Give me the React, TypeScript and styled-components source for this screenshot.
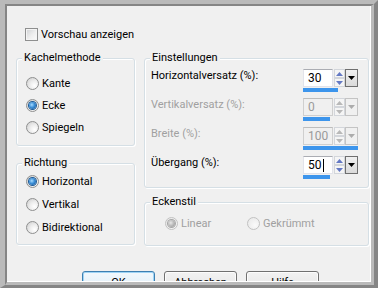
import React from "react";
import styled, { createGlobalStyle, css } from "styled-components";

const GlobalStyle = createGlobalStyle`
  html, body {
    margin: 0;
    padding: 0;
    background: #f0f0f0;
  }
  body {
    font-family: "Segoe UI", Roboto, "Noto Sans", sans-serif;
    font-size: 11px;
    color: #000;
  }
`;

const LIGHT = "#bababa";
const DARK = "#858585";

const Frame = styled.div`
  width: 378px;
  height: 288px;
  box-sizing: border-box;
  display: flex;
  flex-direction: column;
  border-style: solid;
  border-width: 4px 4px 3px 5px;
  border-color: ${LIGHT} ${DARK} ${DARK} ${LIGHT};
`;

const FrameInner = styled.div`
  flex: 1;
  min-height: 0;
  display: flex;
  flex-direction: column;
  border-style: solid;
  border-width: 2px 3px 3px 2px;
  border-color: ${DARK} ${LIGHT} ${LIGHT} ${DARK};
`;

const Content = styled.div`
  flex: 1;
  min-height: 0;
  overflow: hidden;
  background: #f0f0f0;
  border-right: 1px solid #fff;
  border-bottom: 1px solid #fff;
  padding-left: 9px;
`;

const PreviewRow = styled.label`
  display: flex;
  align-items: center;
  gap: 3px;
  height: 13px;
  margin-top: 22px;
  padding-left: 9px;
`;

const CheckBox = styled.span`
  width: 13px;
  height: 13px;
  box-sizing: border-box;
  border: 1px solid #8e8f8f;
  background: linear-gradient(135deg, #cfd1d4 0%, #eeeeee 55%, #fbfbfb 100%);
  box-shadow: inset 0 0 0 1px #f4f4f4;
`;

const Columns = styled.div`
  display: grid;
  grid-template-columns: 119px 225px;
  column-gap: 9px;
  margin-top: 17px;
  align-items: start;
`;

const Column = styled.div<{ $gap: number }>`
  display: flex;
  flex-direction: column;
  gap: ${(p) => p.$gap}px;
`;

const GroupBox = styled.div<{ $height: number }>`
  box-sizing: border-box;
  height: ${(p) => p.$height}px;
  border: 1px solid #d5dfe5;
  border-radius: 3px;
  box-shadow: inset 1px 1px 0 #fff, 1px 1px 0 #fff;
`;

const Caption = styled.div`
  width: fit-content;
  margin: -8px 0 0 5px;
  padding: 0 2px;
  line-height: 14px;
  background: #f0f0f0;
`;

const RadioList = styled.div<{ $top: number; $pitch: number }>`
  display: flex;
  flex-direction: column;
  margin-top: ${(p) => p.$top}px;
  padding-left: 9px;

  & > label {
    height: ${(p) => p.$pitch}px;
  }
`;

const RadioItem = styled.label<{ $disabled?: boolean }>`
  display: flex;
  align-items: center;
  gap: 3px;
  color: ${(p) => (p.$disabled ? "#a0a0a0" : "#000")};
`;

const RadioDot = styled.span<{ $checked?: boolean; $disabled?: boolean }>`
  width: 13px;
  height: 13px;
  box-sizing: border-box;
  border-radius: 50%;
  border: 1px solid ${(p) => (p.$disabled ? "#c2c2c2" : "#8e8f8f")};
  background: ${(p) =>
    p.$disabled
      ? "radial-gradient(circle at 65% 65%, #fafafa 0%, #e6e6e6 100%)"
      : "radial-gradient(circle at 68% 68%, #ffffff 0%, #ececec 45%, #c9c9c9 100%)"};
  display: flex;
  align-items: center;
  justify-content: center;

  ${(p) =>
    p.$checked &&
    css`
      &::after {
        content: "";
        width: 7px;
        height: 7px;
        border-radius: 50%;
        background: ${p.$disabled
          ? "radial-gradient(circle at 40% 40%, #e8e8e8 0%, #b5b5b5 55%, #8f8f8f 100%)"
          : "radial-gradient(circle at 40% 40%, #a9dcff 0%, #3b8fd8 45%, #0e4a8c 100%)"};
        box-shadow: 0 0 0 1px ${p.$disabled ? "#a7a7a7" : "#1c5a96"};
      }
    `}
`;

const SettingsList = styled.div`
  display: flex;
  flex-direction: column;
  margin-top: 4px;
  padding: 0 10px 0 6px;
`;

const SettingRow = styled.div<{ $disabled?: boolean }>`
  display: grid;
  grid-template-columns: 1fr 55px;
  align-items: start;
  height: 29px;
  color: ${(p) => (p.$disabled ? "#a0a0a0" : "#000")};
`;

const SettingLabel = styled.span`
  line-height: 13px;
`;

const Spin = styled.div`
  display: flex;
  flex-direction: column;
`;

const SpinTop = styled.div`
  display: flex;
  height: 18px;
`;

const SpinInput = styled.div<{ $disabled?: boolean }>`
  width: 30px;
  box-sizing: border-box;
  margin-right: 1px;
  padding-left: 4px;
  display: flex;
  align-items: center;
  font-size: 12px;
  background: ${(p) => (p.$disabled ? "#f0f0f0" : "#fff")};
  border: 1px solid ${(p) => (p.$disabled ? "#cfcfcf" : "#e2e3ea")};
  border-top-color: ${(p) => (p.$disabled ? "#bdbdbd" : "#abadb3")};
  color: ${(p) => (p.$disabled ? "#9a9a9a" : "#000")};
`;

const Caret = styled.span`
  width: 1px;
  height: 13px;
  background: #000;
  margin-left: 1px;
`;

const Spinner = styled.div`
  width: 11px;
  display: flex;
  flex-direction: column;
`;

const SpinButton = styled.div`
  flex: 1;
  box-sizing: border-box;
  border: 1px solid #d3d6db;
  background: #f5f5f5;
  display: flex;
  align-items: center;
  justify-content: center;
`;

const DropButton = styled.div<{ $disabled?: boolean }>`
  width: 13px;
  box-sizing: border-box;
  border: 1px solid ${(p) => (p.$disabled ? "#c4c4c4" : "#6f6f6f")};
  background: ${(p) =>
    p.$disabled ? "#f0f0f0" : "linear-gradient(#f0f0f0, #dadada)"};
  display: flex;
  align-items: center;
  justify-content: center;
`;

const Bar = styled.div`
  height: 4px;
  margin-top: 1px;
  background: #3d95ec;
`;

const StyleRow = styled.div`
  display: grid;
  grid-template-columns: 82px auto;
  height: 16px;
  margin-top: 6px;
  padding-left: 20px;
`;

const ButtonRow = styled.div`
  display: flex;
  gap: 9px;
  margin-top: 25px;
  padding-left: 66px;
`;

const DialogButton = styled.button<{ $default?: boolean }>`
  flex: none;
  width: 73px;
  height: 23px;
  padding: 0;
  font: inherit;
  color: #000;
  border-radius: 3px;
  border: 1px solid ${(p) => (p.$default ? "#3c7fb1" : "#707070")};
  background: ${(p) =>
    p.$default
      ? "linear-gradient(#f2f8fc 0%, #e6f2fa 50%, #d2e8f7 51%, #c4e0f4 100%)"
      : "linear-gradient(#f2f2f2 0%, #ebebeb 50%, #dddddd 51%, #cfcfcf 100%)"};
  box-shadow: inset 0 0 0 1px
    ${(p) => (p.$default ? "#9fd4f5" : "#fcfcfc")};
`;

const Arrow = ({ up, color }: { up?: boolean; color: string }) => (
  <svg width="7" height="4" viewBox="0 0 7 4">
    <path d={up ? "M0 4 L3.5 0 L7 4 Z" : "M0 0 L3.5 4 L7 0 Z"} fill={color} />
  </svg>
);

const DropArrow = ({ color }: { color: string }) => (
  <svg width="7" height="4" viewBox="0 0 7 4">
    <path d="M0 0 H7 L3.5 4 Z" fill={color} />
  </svg>
);

interface Setting {
  label: string;
  value: string;
  bar: number;
  disabled?: boolean;
  caret?: boolean;
}

const settings: Setting[] = [
  { label: "Horizontalversatz (%):", value: "30", bar: 35 },
  { label: "Vertikalversatz (%):", value: "0", bar: 27, disabled: true },
  { label: "Breite (%):", value: "100", bar: 55, disabled: true },
  { label: "Übergang (%):", value: "50", bar: 27, caret: true },
];

const Radio = ({
  label,
  checked,
  disabled,
}: {
  label: string;
  checked?: boolean;
  disabled?: boolean;
}) => (
  <RadioItem $disabled={disabled}>
    <RadioDot $checked={checked} $disabled={disabled} />
    {label}
  </RadioItem>
);

const SpinField = ({ s }: { s: Setting }) => {
  const arrow = s.disabled ? "#b8b8b8" : "#6479c4";
  return (
    <Spin>
      <SpinTop>
        <SpinInput $disabled={s.disabled}>
          {s.value}
          {s.caret && <Caret />}
        </SpinInput>
        <Spinner>
          <SpinButton>
            <Arrow up color={arrow} />
          </SpinButton>
          <SpinButton>
            <Arrow color={arrow} />
          </SpinButton>
        </Spinner>
        <DropButton $disabled={s.disabled}>
          <DropArrow color={s.disabled ? "#acacac" : "#000"} />
        </DropButton>
      </SpinTop>
      <Bar style={{ width: s.bar }} />
    </Spin>
  );
};

const App = () => (
  <>
    <GlobalStyle />
    <Frame>
      <FrameInner>
        <Content>
          <PreviewRow>
            <CheckBox />
            Vorschau anzeigen
          </PreviewRow>

          <Columns>
            <Column $gap={17}>
              <GroupBox $height={88}>
                <Caption>Kachelmethode</Caption>
                <RadioList $top={7} $pitch={22}>
                  <Radio label="Kante" />
                  <Radio label="Ecke" checked />
                  <Radio label="Spiegeln" />
                </RadioList>
              </GroupBox>
              <GroupBox $height={82}>
                <Caption>Richtung</Caption>
                <RadioList $top={0} $pitch={23}>
                  <Radio label="Horizontal" checked />
                  <Radio label="Vertikal" />
                  <Radio label="Bidirektional" />
                </RadioList>
              </GroupBox>
            </Column>

            <Column $gap={14}>
              <GroupBox $height={130}>
                <Caption>Einstellungen</Caption>
                <SettingsList>
                  {settings.map((s) => (
                    <SettingRow key={s.label} $disabled={s.disabled}>
                      <SettingLabel>{s.label}</SettingLabel>
                      <SpinField s={s} />
                    </SettingRow>
                  ))}
                </SettingsList>
              </GroupBox>
              <GroupBox $height={44}>
                <Caption>Eckenstil</Caption>
                <StyleRow>
                  <Radio label="Linear" checked disabled />
                  <Radio label="Gekrümmt" disabled />
                </StyleRow>
              </GroupBox>
            </Column>
          </Columns>

          <ButtonRow>
            <DialogButton $default>OK</DialogButton>
            <DialogButton>Abbrechen</DialogButton>
            <DialogButton>Hilfe</DialogButton>
          </ButtonRow>
        </Content>
      </FrameInner>
    </Frame>
  </>
);

export default App;
